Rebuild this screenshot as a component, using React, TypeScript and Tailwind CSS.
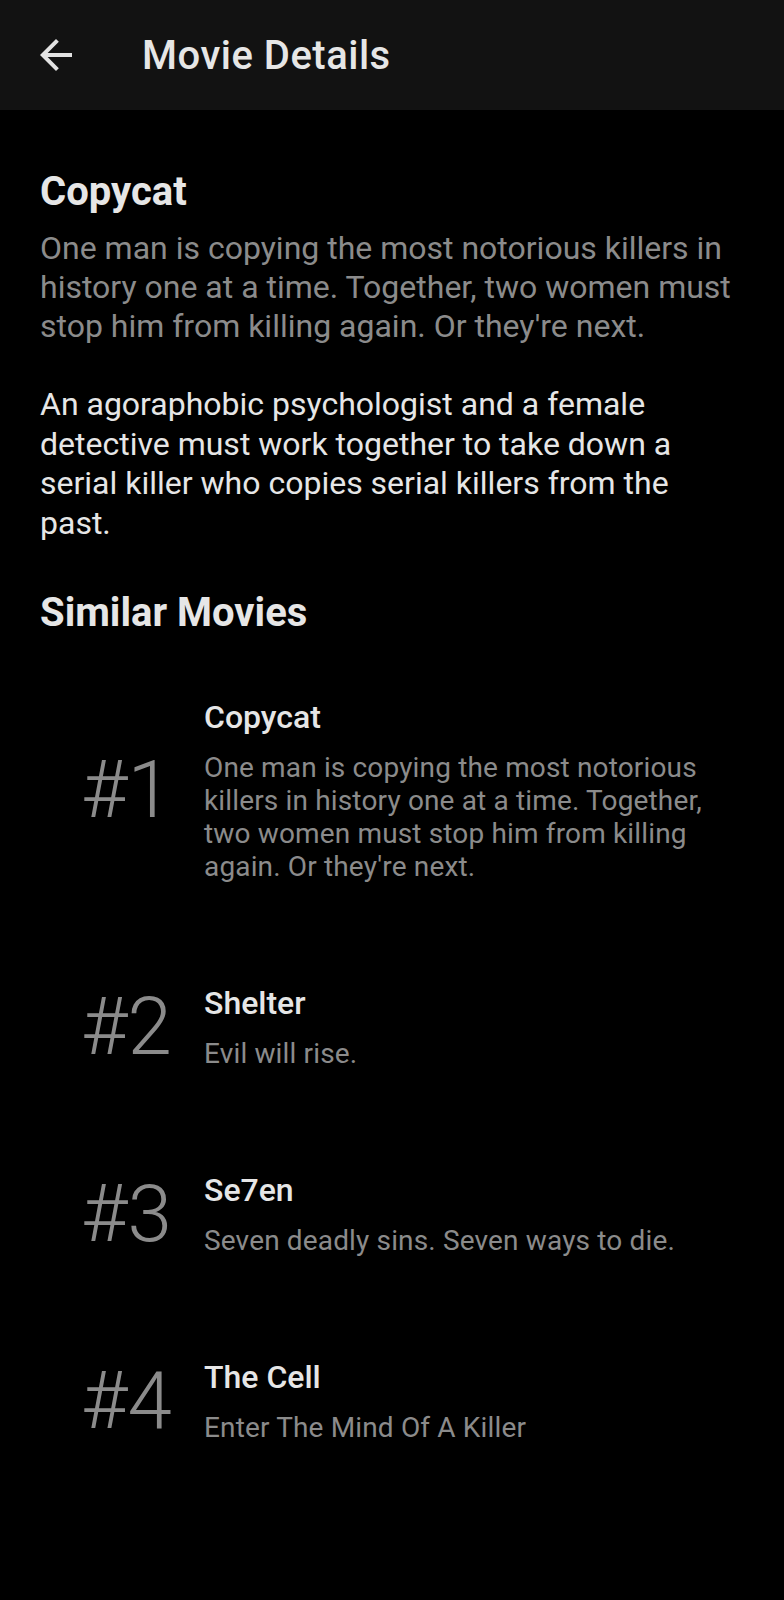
import React from 'react';

interface SimilarMovie {
  rank: number;
  title: string;
  tagline: string;
}

const similar: SimilarMovie[] = [
  {
    rank: 1,
    title: 'Copycat',
    tagline: "One man is copying the most notorious killers in history one at a time. Together, two women must stop him from killing again. Or they're next.",
  },
  { rank: 2, title: 'Shelter', tagline: 'Evil will rise.' },
  { rank: 3, title: 'Se7en', tagline: 'Seven deadly sins. Seven ways to die.' },
  { rank: 4, title: 'The Cell', tagline: 'Enter The Mind Of A Killer' },
];

const BackArrow: React.FC = () => (
  <svg width="48" height="48" viewBox="0 0 24 24" className="fill-[#e2e2e2] shrink-0">
    <path d="M20 11H7.83l5.59-5.59L12 4l-8 8 8 8 1.41-1.41L7.83 13H20v-2z" />
  </svg>
);

const SimilarRow: React.FC<{ movie: SimilarMovie }> = ({ movie }) => (
  <div className="flex items-center py-[50.5px] pl-[41px]">
    <div className="w-[123px] shrink-0 text-[80px] leading-[80px] font-light text-[#8b8b8b]">#{movie.rank}</div>
    <div className="flex flex-col min-w-0">
      <h3 className="text-[32px] leading-[38px] font-medium text-[#e6e6e6]">{movie.title}</h3>
      <p className="mt-[15px] text-[28px] leading-[33px] tracking-[0.15px] text-[#8b8b8b]">{movie.tagline}</p>
    </div>
  </div>
);

export default function App() {
  return (
    <div className="min-h-[1600px] bg-black font-['Roboto',sans-serif]">
      <header className="h-[110px] bg-[#121212] flex items-center pl-[32px]">
        <BackArrow />
        <h1 className="ml-[62px] text-[40px] leading-[47px] font-medium tracking-[0.5px] text-[#e6e6e6]">Movie Details</h1>
      </header>

      <main className="px-[40px] pt-[58px]">
        <h2 className="text-[40px] leading-[47px] font-bold text-[#e6e6e6]">Copycat</h2>
        <p className="mt-[14px] text-[32px] leading-[39px] text-[#8b8b8b]">
          One man is copying the most notorious killers in history one at a time. Together, two women must stop him from killing again. Or they're next.
        </p>
        <p className="mt-[39px] text-[32px] leading-[39.5px] text-[#e6e6e6]">
          An agoraphobic psychologist and a female detective must work together to take down a serial killer who copies serial killers from the past.
        </p>

        <h2 className="mt-[46px] text-[40px] leading-[47px] font-bold text-[#e6e6e6]">Similar Movies</h2>

        <div className="mt-[11px] -mx-[40px] px-[40px]">
          {similar.map(m => (
            <SimilarRow key={m.rank} movie={m} />
          ))}
        </div>
      </main>
    </div>
  );
}
